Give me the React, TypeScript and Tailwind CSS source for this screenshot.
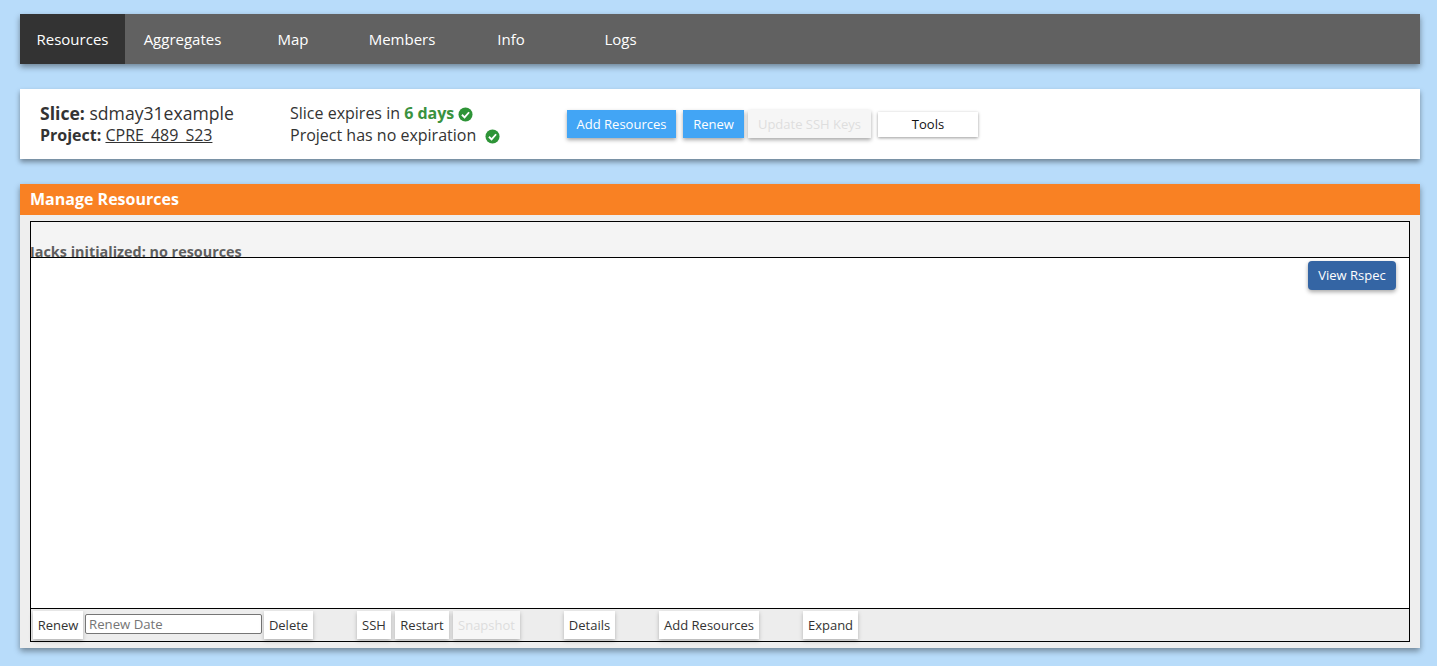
import React from "react";

const Check = ({ className = "" }: { className?: string }) => (
  <svg viewBox="0 0 16 16" className={`w-[15px] h-[15px] ${className}`}>
    <circle cx="8" cy="8" r="7.5" fill="#2e9437" />
    <path d="M4.2 8.3 L7 11 L11.8 5.6" fill="none" stroke="#fff" strokeWidth="2" />
  </svg>
);

const NavItem = ({ label, w, active }: { label: string; w: string; active?: boolean }) => (
  <div className={`h-full flex items-center justify-center text-white text-[15px] ${w} ${active ? "bg-[#333333]" : ""}`}>{label}</div>
);

const ToolBtn = ({ label, w, ml, disabled }: { label: string; w: string; ml: string; disabled?: boolean }) => (
  <div
    className={`h-[28px] pt-[1px] flex items-center justify-center text-[13px] shadow-[0_2px_4px_rgba(0,0,0,0.25)] ${w} ${ml} ${
      disabled ? "bg-[#f6f6f6] text-[#dddddd]" : "bg-white text-[#333333]"
    }`}
  >
    {label}
  </div>
);

export default function App() {
  return (
    <div className="h-[666px] overflow-hidden bg-[#b8dcfa] pl-5 pr-[17px] pt-[14px] font-['Open_Sans',sans-serif]">
      <nav className="h-[50px] flex items-center bg-[#616161] shadow-[0_3px_6px_rgba(0,0,0,0.4)]">
        <NavItem label="Resources" w="w-[105px]" active />
        <NavItem label="Aggregates" w="w-[115px]" />
        <NavItem label="Map" w="w-[106px]" />
        <NavItem label="Members" w="w-[112px]" />
        <NavItem label="Info" w="w-[106px]" />
        <NavItem label="Logs" w="w-[113px]" />
      </nav>

      <section className="mt-[25px] h-[70px] bg-white flex items-center shadow-[0_3px_5px_rgba(0,0,0,0.4)] text-[#333333]">
        <div className="w-[250px] pl-5 leading-[22px]">
          <div className="whitespace-nowrap text-[17.6px]">
            <b>Slice:</b> sdmay31example
          </div>
          <div className="whitespace-nowrap text-[16px]">
            <b>Project:</b> <span className="underline">CPRE_489_S23</span>
          </div>
        </div>
        <div className="ml-[20px] w-[277px] text-[16px] leading-[22px]">
          <div className="flex items-center whitespace-nowrap">
            Slice expires in&nbsp;<b className="text-[#3a9240]">6 days</b>
            <Check className="ml-[4px] mt-[2px]" />
          </div>
          <div className="flex items-center whitespace-nowrap">
            Project has no expiration
            <Check className="ml-[9px] mt-[2px]" />
          </div>
        </div>
        <div className="flex items-center text-[13px]">
          <div className="w-[109px] h-[28px] pt-[1px] bg-[#42a5f5] text-white flex items-center justify-center shadow-[0_2px_4px_rgba(0,0,0,0.35)]">Add Resources</div>
          <div className="ml-[7px] w-[61px] h-[28px] pt-[1px] bg-[#42a5f5] text-white flex items-center justify-center shadow-[0_2px_4px_rgba(0,0,0,0.35)]">Renew</div>
          <div className="ml-[4px] w-[123px] h-[28px] pt-[1px] bg-[#f6f6f6] text-[#dedede] flex items-center justify-center shadow-[0_2px_4px_rgba(0,0,0,0.35)]">Update SSH Keys</div>
          <div className="ml-[7px] w-[100px] h-[25px] pt-[1px] bg-white text-[#111111] flex items-center justify-center shadow-[0_1px_3px_rgba(0,0,0,0.4)]">Tools</div>
        </div>
      </section>

      <section className="mt-[25px] h-[464px] bg-[#eeeeee] shadow-[0_3px_6px_rgba(0,0,0,0.4)] flex flex-col">
        <h2 className="h-[31px] shrink-0 bg-[#f98123] text-white font-bold text-[16px] leading-[31px] pl-[10px]">Manage Resources</h2>
        <div className="mx-[10px] mt-[6px] h-[421px] border border-black flex flex-col">
          <div className="h-[35px] shrink-0 bg-[#f4f4f4] overflow-hidden text-[14.4px] font-bold text-[#5f5f5f] leading-[19px] pt-[20px] whitespace-nowrap">
            <span className="block -ml-[1px]">Jacks initialized: no resources</span>
          </div>
          <div className="h-[352px] shrink-0 bg-white border-t border-b border-black flex justify-end items-start pr-[13px] pt-[3px]">
            <div className="w-[88px] h-[29px] rounded-[4px] bg-[#3465a4] text-white text-[13px] flex items-center justify-center shadow-[0_2px_4px_rgba(0,0,0,0.35)]">View Rspec</div>
          </div>
          <div className="flex-1 bg-[#ededed] flex items-start pt-[2px] pl-[2px]">
            <ToolBtn label="Renew" w="w-[50px]" ml="ml-0" />
            <input
              readOnly
              placeholder="Renew Date"
              className="ml-[2px] mt-[3px] w-[177px] h-[20px] bg-white border border-[#767676] rounded-[2px] px-[3px] text-[13.2px] leading-[16px] text-[#757575] placeholder:text-[#757575] outline-none"
            />
            <ToolBtn label="Delete" w="w-[49px]" ml="ml-[2px]" />
            <ToolBtn label="SSH" w="w-[34px]" ml="ml-[44px]" />
            <ToolBtn label="Restart" w="w-[54px]" ml="ml-[4px]" />
            <ToolBtn label="Snapshot" w="w-[67px]" ml="ml-[4px]" disabled />
            <ToolBtn label="Details" w="w-[51px]" ml="ml-[44px]" />
            <ToolBtn label="Add Resources" w="w-[100px]" ml="ml-[44px]" />
            <ToolBtn label="Expand" w="w-[55px]" ml="ml-[44px]" />
          </div>
        </div>
      </section>
    </div>
  );
}
